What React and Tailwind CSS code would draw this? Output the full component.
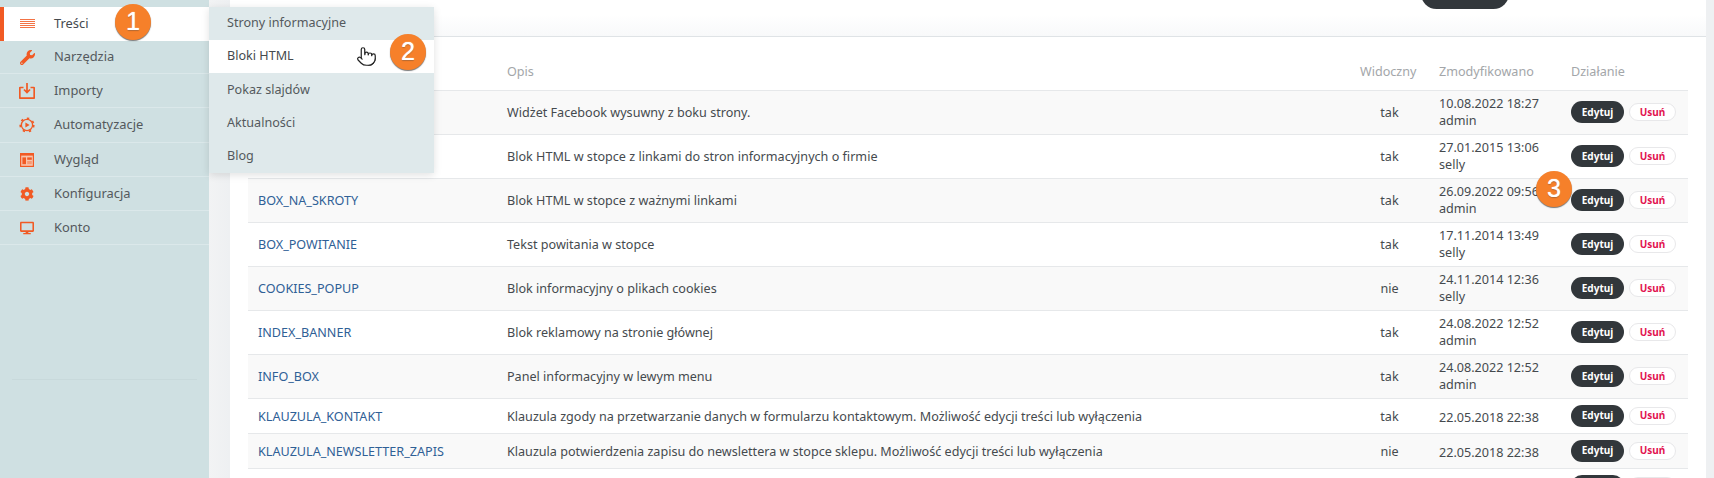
import React from 'react'
import { Pointer } from 'lucide-react'
import { FaWrench, FaCog, FaDesktop } from 'react-icons/fa'

function LinesIcon() {
  return (
    <svg width="15" height="10" viewBox="0 0 15 10" fill="none" stroke="#f15a24" strokeWidth="1">
      <path d="M0 .5h15M0 2.5h15M0 4.5h15M0 6.5h15M0 8.5h15" opacity="0.85" />
    </svg>
  )
}

function ImportIcon() {
  return (
    <svg width="16" height="16" viewBox="0 0 16 16" fill="none" stroke="#f15a24" strokeWidth="1.7">
      <path d="M4.5 4.5H1.2a.4.4 0 0 0-.4.4v9.9c0 .2.2.4.4.4h13.6c.2 0 .4-.2.4-.4V4.9a.4.4 0 0 0-.4-.4h-3.3" />
      <path d="M8 0v9M5 6.5 8 9.6l3-3.1" />
    </svg>
  )
}

function GearPlayIcon() {
  return (
    <svg width="16" height="16" viewBox="0 0 16 16" fill="none" stroke="#f15a24">
      <circle cx="8" cy="8" r="5.6" strokeWidth="1.3" />
      <circle cx="8" cy="8" r="6.8" strokeWidth="1.6" strokeDasharray="2.4 3.94" />
      <path d="M6.4 5.4 10.6 8l-4.2 2.6z" fill="#f15a24" stroke="none" />
    </svg>
  )
}

function LayoutIcon() {
  return (
    <svg width="14" height="14" viewBox="0 0 14 14">
      <rect x=".6" y=".6" width="12.8" height="12.8" fill="#f8c4ad" stroke="#f15a24" strokeWidth="1.2" />
      <path d="M0 0h14v2.6H0z" fill="#f15a24" />
      <path d="M2.4 4.4h3.6v6.8H2.4z" fill="#f15a24" />
      <path d="M7.2 4.4h4.6v2.4H7.2z" fill="#f15a24" />
      <path d="M7.2 8h4.6v3.2H7.2z" fill="#f79a75" />
    </svg>
  )
}

const menu = [
  { label: 'Treści', icon: <LinesIcon />, active: true, h: 'h-[34px]' },
  { label: 'Narzędzia', icon: <FaWrench size={15} color="#f15a24" />, h: 'h-[33px]' },
  { label: 'Importy', icon: <ImportIcon />, h: 'h-[34px]' },
  { label: 'Automatyzacje', icon: <GearPlayIcon />, h: 'h-[35px]' },
  { label: 'Wygląd', icon: <LayoutIcon />, h: 'h-[34px]' },
  { label: 'Konfiguracja', icon: <FaCog size={14} color="#f15a24" />, h: 'h-[34px]' },
  { label: 'Konto', icon: <FaDesktop size={14} color="#f15a24" />, h: 'h-[34px]' },
]

const submenu = ['Strony informacyjne', 'Bloki HTML', 'Pokaz slajdów', 'Aktualności', 'Blog']

const rows = [
  ['', 'Widżet Facebook wysuwny z boku strony.', 'tak', '10.08.2022 18:27', 'admin'],
  ['', 'Blok HTML w stopce z linkami do stron informacyjnych o firmie', 'tak', '27.01.2015 13:06', 'selly'],
  ['BOX_NA_SKROTY', 'Blok HTML w stopce z ważnymi linkami', 'tak', '26.09.2022 09:56', 'admin'],
  ['BOX_POWITANIE', 'Tekst powitania w stopce', 'tak', '17.11.2014 13:49', 'selly'],
  ['COOKIES_POPUP', 'Blok informacyjny o plikach cookies', 'nie', '24.11.2014 12:36', 'selly'],
  ['INDEX_BANNER', 'Blok reklamowy na stronie głównej', 'tak', '24.08.2022 12:52', 'admin'],
  ['INFO_BOX', 'Panel informacyjny w lewym menu', 'tak', '24.08.2022 12:52', 'admin'],
  ['KLAUZULA_KONTAKT', 'Klauzula zgody na przetwarzanie danych w formularzu kontaktowym. Możliwość edycji treści lub wyłączenia', 'tak', '22.05.2018 22:38'],
  ['KLAUZULA_NEWSLETTER_ZAPIS', 'Klauzula potwierdzenia zapisu do newslettera w stopce sklepu. Możliwość edycji treści lub wyłączenia', 'nie', '22.05.2018 22:38'],
]

function Badge({ n, className }) {
  return (
    <div className={`absolute flex h-[36px] w-[36px] items-center justify-center rounded-full bg-[#f6802a] font-['Liberation_Sans',sans-serif] text-[25px] text-white shadow-[0_1px_1px_rgba(60,60,60,0.7)] [text-shadow:0_0_1px_#fff,0_1px_1px_rgba(0,0,0,0.3)] ${className}`}>
      {n}
    </div>
  )
}

function Buttons({ labels = true }) {
  return (
    <div className="flex items-center gap-[5px]">
      <span className="flex h-[22px] w-[53px] items-center justify-center rounded-full bg-[#32373b] text-[10px] font-bold text-white">{labels ? 'Edytuj' : null}</span>
      <span className="flex h-[18px] w-[47px] items-center justify-center rounded-full border border-[#e8e8ea] bg-white text-[10px] font-bold text-[#e2134f]">{labels ? 'Usuń' : null}</span>
    </div>
  )
}

function Row({ row, i }) {
  const [name, desc, visible, date, user] = row
  const tall = i < 7
  return (
    <tr className={`border-t border-[#e6e8ea] ${i % 2 === 0 ? 'bg-[#f9f9f9]' : 'bg-white'} ${tall ? 'h-[44px]' : 'h-[35px]'}`}>
      <td className="px-[10px] pt-[3px] text-[#2f6096]">{name}</td>
      <td className="px-[10px] pt-[3px] text-[#454a4e]">{desc}</td>
      <td className="px-[10px] pt-[3px] text-center text-[#454a4e]">{visible}</td>
      <td className={`px-[10px] leading-[17px] text-[#454a4e] ${user ? '' : 'pt-[3px]'}`}>
        {date}
        {user ? <br /> : null}
        {user}
      </td>
      <td className="px-[10px]">
        <Buttons />
      </td>
    </tr>
  )
}

export default function App() {
  return (
    <div className="relative flex h-[478px] w-[1714px] overflow-hidden bg-[#eef0f2] font-['Noto_Sans','Open_Sans',sans-serif] text-[12.6px]">
      <aside className="flex w-[209px] shrink-0 flex-col bg-[#cfe0e2] pt-[7px] text-[12.9px] text-[#54595d]">
        {menu.map((item) => (
          <div
            key={item.label}
            className={`flex shrink-0 items-center ${item.h} ${item.active ? 'border-l-4 border-[#f15a24] bg-white text-[#454a4e]' : 'border-b border-[#dbe8ea] pl-[4px]'}`}
          >
            <span className="flex w-[50px] justify-center pl-[3px] pr-[7px]">{item.icon}</span>
            {item.label}
          </div>
        ))}
        <div className="mx-[12px] mt-[134px] h-px bg-[#c8d9db]" />
      </aside>

      <div className="w-[21px] shrink-0 bg-gradient-to-r from-[#f2f3f4] to-[#eef0f2]" />

      <main className="flex w-[1476px] shrink-0 flex-col overflow-hidden bg-white">
        <div className="flex h-[37px] shrink-0 justify-end border-b border-[#dfe3e6] bg-gradient-to-b from-white from-40% to-[#f8f9fa] pr-[197px]">
          <div className="-mt-[22px] h-[30.5px] w-[88px] rounded-full bg-[#32373b]" />
        </div>
        <div className="px-[18px]">
          <table className="w-[1440px] table-fixed border-collapse">
            <colgroup>
              <col className="w-[249px]" />
              <col className="w-[853px]" />
              <col className="w-[79px]" />
              <col className="w-[132px]" />
              <col className="w-[127px]" />
            </colgroup>
            <thead>
              <tr className="h-[53px] text-left text-[#a3a6a9]">
                <th className="px-[10px] pt-[19px] font-normal" />
                <th className="px-[10px] pt-[19px] font-normal">Opis</th>
                <th className="px-[10px] pt-[19px] font-normal">Widoczny</th>
                <th className="px-[10px] pt-[19px] font-normal">Zmodyfikowano</th>
                <th className="px-[10px] pt-[19px] font-normal">Działanie</th>
              </tr>
            </thead>
            <tbody>
              {rows.map((row, i) => (
                <Row key={row[1]} row={row} i={i} />
              ))}
              <tr className="h-[35px] border-t border-[#e6e8ea]">
                <td colSpan={4} />
                <td className="px-[10px]">
                  <Buttons labels={false} />
                </td>
              </tr>
            </tbody>
          </table>
        </div>
      </main>

      {/* rozwiniete podmenu */}
      <div className="absolute left-[209px] top-[7px] w-[225px] bg-[#dfe9eb] text-[12.6px] text-[#54595d] shadow-[0_2px_8px_rgba(0,0,0,0.12)]">
        {submenu.map((label, i) => (
          <div key={label} className={`flex h-[33.2px] items-center pl-[18px] ${i === 1 ? 'bg-white text-[#454a4e]' : ''}`}>
            {label}
          </div>
        ))}
      </div>

      <Pointer size={21} color="#222" fill="#fff" strokeWidth={1.4} className="absolute left-[356px] top-[46px]" />
      <Badge n="1" className="left-[115px] top-[4px]" />
      <Badge n="2" className="left-[390px] top-[34px]" />
      <Badge n="3" className="left-[1536px] top-[171px]" />
    </div>
  )
}
